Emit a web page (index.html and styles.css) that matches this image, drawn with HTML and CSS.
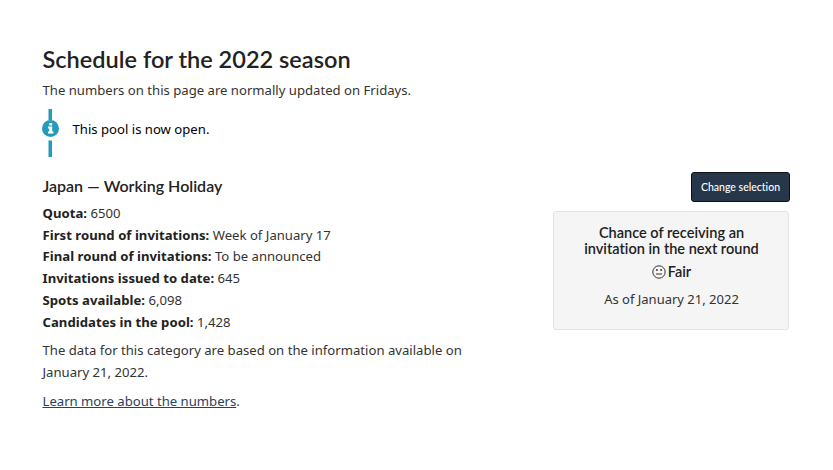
FILE: index.html
```html
<!DOCTYPE html>
<html lang="en">

<head>
    <meta charset="UTF-8">
    <meta name="viewport" content="width=device-width, initial-scale=1.0">
    <title>Schedule for the 2022 season</title>
    <link rel="stylesheet" href="styles.css">
</head>

<body>
    <main>
        <h1>Schedule for the 2022 season</h1>
        <p class="intro">The numbers on this page are normally updated on Fridays.</p>

        <div class="alert-info">
            <svg class="info-icon" width="18" height="48" viewBox="0 0 18 48">
                <path d="M6.5 0H10v11H6.5zM6.5 31.5H10V48H6.5z" fill="#269abc"/>
                <circle cx="8.5" cy="19.5" r="8.5" fill="#269abc"/>
                <path d="M7.2 14h3v2.6h-3zM6 17.6h4.2v4.9h1.2v2H6v-2h1.2v-2.9H6z" fill="#fff"/>
            </svg>
            <p>This pool is now open.</p>
        </div>

        <div class="content">
            <section class="details">
                <h2>Japan — Working Holiday</h2>
                <ul class="numbers">
                    <li><strong>Quota:</strong> 6500</li>
                    <li><strong>First round of invitations:</strong> Week of January 17</li>
                    <li><strong>Final round of invitations:</strong> To be announced</li>
                    <li><strong>Invitations issued to date:</strong> 645</li>
                    <li><strong>Spots available:</strong> 6,098</li>
                    <li><strong>Candidates in the pool:</strong> 1,428</li>
                </ul>
                <p>The data for this category are based on the information available on January 21, 2022.</p>
                <p><a href="#">Learn more about the numbers</a>.</p>
            </section>

            <aside class="side">
                <button class="change-button">Change selection</button>
                <div class="well">
                    <h3>Chance of receiving an invitation in the next round</h3>
                    <div class="chance">
                        <svg width="14" height="14" viewBox="0 0 14 14" fill="none" stroke="#333">
                            <circle cx="7" cy="7" r="6.2" stroke-width="1"/>
                            <path d="M4 9h6" stroke-width="1"/>
                            <path d="M4.9 4v2M9.1 4v2" stroke-width="1.4"/>
                        </svg>
                        <span>Fair</span>
                    </div>
                    <p>As of January 21, 2022</p>
                </div>
            </aside>
        </div>
    </main>
</body>

</html>
```

FILE: styles.css
```css
body {
    margin: 0;
    background-color: #fff;
    color: #333;
    font-family: 'Noto Sans', sans-serif;
    font-size: 13.13px;
    line-height: 21.7px;
    font-variant-ligatures: none;
}

main {
    padding: 44px 43px 0 42.5px;
}

h1,
h2,
h3,
p,
ul {
    margin: 0;
    padding: 0;
}

h1,
h2,
h3 {
    color: #222;
    font-family: Lato, sans-serif;
    font-weight: 600;
}

h1 {
    font-size: 23.55px;
    line-height: 30px;
}

.intro {
    margin-top: 6px;
}

.alert-info {
    display: flex;
    gap: 12px;
    height: 48px;
    margin-top: 7.3px;
    color: #000;
}

.info-icon {
    margin-left: -0.5px;
    margin-right: 0.5px;
}

.alert-info p {
    margin-top: 10px;
}

.content {
    display: flex;
    justify-content: space-between;
    margin-top: 15px;
}

.details {
    width: 440px;
}

.details h2 {
    font-size: 16px;
    line-height: 20px;
    margin: 4px 0 7px;
}

.numbers {
    list-style: none;
}

.numbers strong {
    color: #222;
    letter-spacing: 0.03px;
}

.details p {
    margin-top: 7px;
}

.details a {
    color: #284162;
}

.side {
    display: flex;
    flex-direction: column;
    align-items: flex-end;
    gap: 9px;
}

.change-button {
    width: 99px;
    height: 30px;
    padding: 0;
    background-color: #26374a;
    border: 1px solid #111;
    border-radius: 3px;
    color: #fff;
    font-family: Lato, sans-serif;
    font-size: 10.5px;
    font-weight: 500;
    font-variant-ligatures: none;
    cursor: pointer;
}

.well {
    box-sizing: border-box;
    width: 236px;
    height: 119px;
    margin-right: 1px;
    padding: 13px 19px 13px 20px;
    background-color: #f5f5f5;
    border: 1px solid #e3e3e3;
    border-radius: 3px;
    text-align: center;
}

.well h3 {
    font-size: 14.55px;
    line-height: 16px;
}

.chance {
    display: flex;
    justify-content: center;
    align-items: center;
    gap: 2px;
    margin-top: 4px;
    color: #222;
    font-family: Lato, sans-serif;
    font-size: 14.5px;
    font-weight: 600;
}

.well p {
    margin-top: 6px;
    font-size: 13px;
}
```
